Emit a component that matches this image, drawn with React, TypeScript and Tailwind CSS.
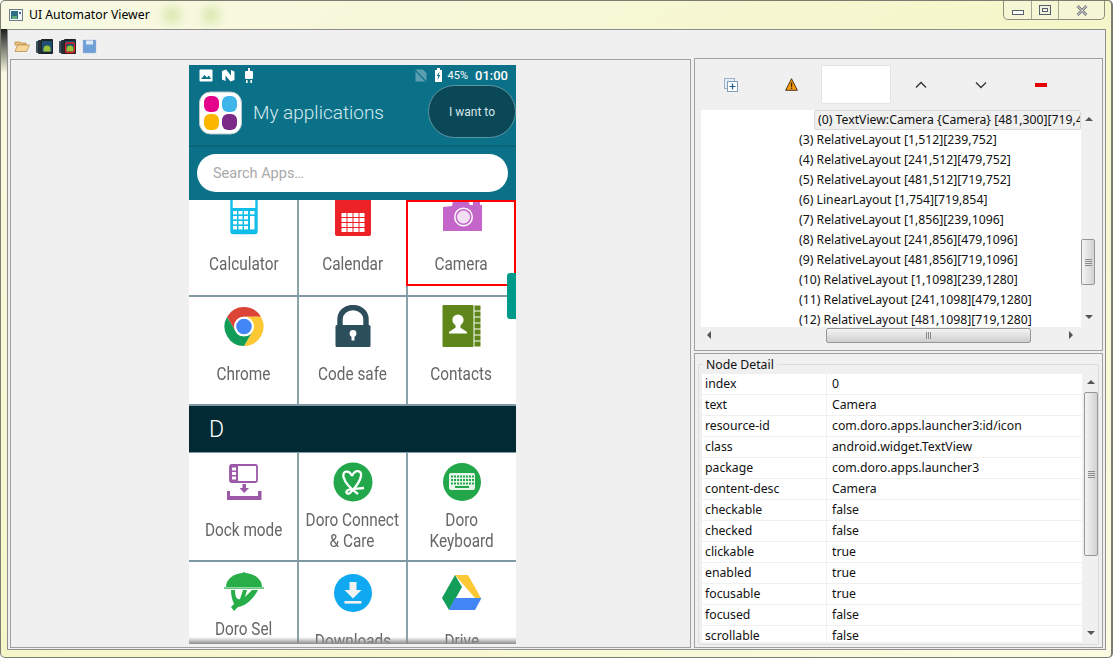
import React from "react";

const UI = "font-['Noto_Sans',sans-serif]";

function Arrow({ dir, className = "" }: { dir: "up" | "down" | "left" | "right"; className?: string }) {
  const pts = { up: "0,5 4,1 8,5", down: "0,1 8,1 4,5", left: "5,0 5,8 1,4", right: "1,0 1,8 5,4" }[dir];
  return (
    <svg width="8" height="8" viewBox="0 0 8 8" className={className}>
      <polygon points={pts} fill="#555" />
    </svg>
  );
}

function VThumb({ h }: { h: number }) {
  return (
    <div style={{ height: h }} className="w-[14px] rounded-[2px] border border-[#979797] bg-gradient-to-r from-[#f4f4f4] to-[#d2d2d2] flex flex-col items-center justify-center gap-[1px]">
      <div className="w-[7px] h-px bg-[#8a8a8a]" />
      <div className="w-[7px] h-px bg-[#8a8a8a]" />
      <div className="w-[7px] h-px bg-[#8a8a8a]" />
      <div className="w-[7px] h-px bg-[#8a8a8a]" />
    </div>
  );
}

function TitleBar() {
  return (
    <div className="relative h-[28px] shrink-0 flex items-start justify-between">
      <div className="flex items-center pl-[2px] pt-[5px] gap-[6px]">
        <svg width="14" height="14" viewBox="0 0 14 14">
          <rect x="0.5" y="1.5" width="13" height="11" fill="#f4f6f8" stroke="#6d7c88" />
          <rect x="2" y="3" width="7" height="8" fill="#2f6f7f" />
          <rect x="3" y="8" width="5" height="3" fill="#5fae7a" />
          <rect x="10" y="4" width="2" height="2" fill="#3d6fb5" />
        </svg>
        <span className={`${UI} text-[12.25px] text-black`}>UI Automator Viewer</span>
      </div>
      <div className="flex h-[19px] w-[102px] mr-px rounded-b-[5px] border border-t-0 border-[#8c8f80] bg-[#f5f6d8]/70">
        <div className="w-[28px] border-r border-[#a5a795] flex items-center justify-center">
          <div className="w-[12px] h-[5px] mt-[4px] border border-[#56606c] bg-white" />
        </div>
        <div className="w-[27px] border-r border-[#a5a795] flex items-center justify-center">
          <div className="w-[12px] h-[10px] border border-[#56606c] flex items-center justify-center bg-[#eef0e0]">
            <div className="w-[6px] h-[4px] border border-[#56606c]" />
          </div>
        </div>
        <div className="flex-1 flex items-center justify-center">
          <svg width="12" height="11" viewBox="0 0 12 11">
            <path d="M1.5 1 L10.5 10 M10.5 1 L1.5 10" stroke="#6b7078" strokeWidth="2.6" />
            <path d="M1.5 1 L10.5 10 M10.5 1 L1.5 10" stroke="#f4f4f4" strokeWidth="1" />
          </svg>
        </div>
      </div>
    </div>
  );
}

function DeviceIcon({ red }: { red?: boolean }) {
  return (
    <svg width="17" height="17" viewBox="0 0 17 17">
      <rect x="0" y="3" width="4" height="12" rx="1" fill="#39505e" />
      <rect x="2" y="2" width="5" height="14" rx="1" fill="#253038" />
      <rect x="5" y="1" width="12" height="15" rx="1" fill="#1c2226" />
      <rect x="6" y="3" width="10" height="11" fill="#1d4f73" />
      <path d="M7.5 11 a3.5 3.5 0 0 1 7 0 z" fill="#9cc13a" />
      <rect x="7.5" y="11" width="7" height="2.5" fill="#9cc13a" />
      {red && <rect x="6.5" y="5" width="9" height="9.5" rx="2" fill="none" stroke="#e02020" strokeWidth="1.3" />}
    </svg>
  );
}

function Toolbar() {
  return (
    <div className="h-[28px] shrink-0 flex items-center pl-[4px] pt-[4px] gap-[6px]">
      <svg width="16" height="14" viewBox="0 0 16 14">
        <path d="M1 3 h5 l1 1 h5 v2 H1z" fill="#e9c27e" stroke="#b98f4f" strokeWidth="0.8" />
        <path d="M1 12.5 L3.5 6 H15.5 L12.5 12.5 Z" fill="#f7d89a" stroke="#b98f4f" strokeWidth="0.8" />
      </svg>
      <DeviceIcon />
      <DeviceIcon red />
      <svg width="15" height="15" viewBox="0 0 15 15">
        <rect x="0.5" y="0.5" width="14" height="14" fill="#fff" stroke="#dfe6ee" />
        <rect x="1.5" y="1.5" width="12" height="12" fill="#6f9fd8" stroke="#5685bd" strokeWidth="0.6" />
        <rect x="4" y="1.5" width="7" height="4" fill="#dfeaf6" />
      </svg>
    </div>
  );
}

function StatusBar() {
  return (
    <div className="h-[20px] shrink-0 flex items-center pl-[10px] pr-[8px] text-white">
      <svg width="14" height="13" viewBox="0 0 14 13">
        <rect width="13" height="12" x="0.5" y="0.5" rx="1" fill="#fff" />
        <path d="M2 10 L5.5 6 L8 8.5 L10 6.5 L12 10 Z" fill="#0b7188" />
      </svg>
      <svg width="14" height="13" viewBox="0 0 14 13" className="ml-[8px]">
        <path d="M1 2 L5 0.5 L10 6.5 V1 L13.5 2.5 V11 L9.5 12.5 L4.5 6.5 V12 L1 10.5 Z" fill="#fff" />
      </svg>
      <svg width="8" height="15" viewBox="0 0 8 15" className="ml-[10px]">
        <path d="M3 0 h2 v3 h2 a1 1 0 0 1 1 1 v6 a1 1 0 0 1 -1 1 H1 a1 1 0 0 1 -1 -1 V4 a1 1 0 0 1 1 -1 h2z" fill="#fff" />
        <rect x="1" y="12" width="1.6" height="3" fill="#fff" />
        <rect x="5.4" y="12" width="1.6" height="3" fill="#fff" />
      </svg>
      <div className="flex-1" />
      <svg width="12" height="13" viewBox="0 0 12 13">
        <path d="M0.5 0.5 H8 L11.5 4 V12.5 H0.5 Z" fill="#5c9fb1" />
        <path d="M0 1 L11 12.5" stroke="#0b7188" strokeWidth="1.2" />
      </svg>
      <svg width="7" height="14" viewBox="0 0 7 14" className="ml-[8px]">
        <rect x="2" y="0" width="3" height="2" fill="#fff" />
        <rect x="0" y="2" width="7" height="12" fill="#fff" />
        <path d="M4.5 3.5 L1.8 8 H3.3 L2.5 12 L5.3 7 H3.8 Z" fill="#0b7188" />
      </svg>
      <span className="ml-[6px] font-['Roboto',sans-serif] text-[11px] leading-none">45%</span>
      <span className="ml-[7px] font-['Roboto',sans-serif] font-medium text-[13px] leading-none">01:00</span>
    </div>
  );
}

function Logo() {
  return (
    <svg width="43" height="44" viewBox="0 0 43 44">
      <rect x="0.5" y="1" width="42" height="42" rx="11" fill="#fff" stroke="#b9c7cb" />
      <rect x="5" y="5" width="15" height="16" rx="6" fill="#e5008a" />
      <rect x="23" y="5" width="15" height="16" rx="6" fill="#3eb6ea" />
      <rect x="5" y="23" width="15" height="16" rx="6" fill="#fdb600" />
      <rect x="23" y="23" width="15" height="16" rx="6" fill="#7b2a87" />
    </svg>
  );
}

function PhoneHeader() {
  return (
    <div className="shrink-0 bg-[#0b7188]">
      <StatusBar />
      <div className="h-[60px] flex items-start pl-[10px] relative">
        <div className="mt-[6px]"><Logo /></div>
        <span className="ml-[11px] mt-[14px] font-['Roboto',sans-serif] font-light text-[19px] leading-[27px] text-[#d5eaef]">My applications</span>
        <div className="absolute left-[239px] top-0 w-[88px] h-[53px] rounded-[27px] bg-[#0a4858] border border-[#5d97a5] flex items-center justify-center">
          <span className="font-['Roboto',sans-serif] text-[12px] text-[#d8e6ea]">I want to</span>
        </div>
      </div>
      <div className="h-[2px] bg-[#0a6579]" />
      <div className="pt-[7px] pb-[8px] pl-[8px] pr-[8px]">
        <div className="h-[38px] rounded-full bg-white flex items-center pl-[16px] pt-[2px]">
          <span className="font-['Roboto',sans-serif] text-[14.5px] text-[#a9a9a9]">Search Apps…</span>
        </div>
      </div>
    </div>
  );
}

const Calc = (
  <svg width="44" height="44" viewBox="0 0 44 44">
    <rect x="9.5" y="-4" width="25" height="41" rx="2" fill="#fff" stroke="#10bce8" strokeWidth="2.4" />
    <rect x="9" y="12" width="26" height="26" rx="1" fill="#10bce8" />
    {[15, 20, 25, 30].map((y) =>
      [11, 16.5, 22].map((x) => <rect key={`${x}-${y}`} x={x} y={y} width="4" height="3.4" fill="#fff" />)
    )}
    <rect x="28" y="15" width="4.5" height="3.4" fill="#fff" />
    <rect x="28" y="20" width="4.5" height="13.4" fill="#fff" />
  </svg>
);
const Cal = (
  <svg width="44" height="44" viewBox="0 0 44 44">
    <rect x="4" y="-4" width="36" height="44" rx="2" fill="#ec2227" />
    {[17, 22, 27, 32].map((y) =>
      [0, 1, 2, 3].map((i) => <rect key={`${i}-${y}`} x={10.5 + i * 6} y={y} width="5" height="4" fill="#fff" />)
    )}
  </svg>
);
const Cam = (
  <svg width="44" height="44" viewBox="0 0 44 44">
    <path d="M3 11 L12 10 L13 5 H28 L30 9 H42 V35 H3 Z" fill="#c465c9" />
    <rect x="33" y="6" width="7" height="3" fill="#c465c9" />
    <circle cx="23.5" cy="21" r="9.5" fill="#fff" />
    <circle cx="23.5" cy="21" r="8" fill="#c465c9" />
    <circle cx="23.5" cy="21" r="6.5" fill="#f2dff3" />
  </svg>
);
const Chrome = (
  <svg width="44" height="44" viewBox="0 0 44 44">
    <path d="M5.1 11.75 A19.5 19.5 0 0 1 38.9 11.75 H22 A9.75 9.75 0 0 0 13.55 26.4 Z" fill="#db4437" />
    <path d="M38.9 11.75 A19.5 19.5 0 0 1 22 41 L30.45 26.4 A9.75 9.75 0 0 0 22 11.75 Z" fill="#fcc934" />
    <path d="M22 41 A19.5 19.5 0 0 1 5.1 11.75 L13.55 26.4 A9.75 9.75 0 0 0 30.45 26.4 Z" fill="#0f9d58" />
    <circle cx="22" cy="21.5" r="9.75" fill="#fff" />
    <circle cx="22" cy="21.5" r="7.8" fill="#4285f4" />
  </svg>
);
const Lock = (
  <svg width="44" height="44" viewBox="0 0 44 44">
    <path d="M9 22 V14 A13 11.5 0 0 1 35 14 V22" fill="none" stroke="#2c4d5a" strokeWidth="5.4" />
    <rect x="4.5" y="20" width="35" height="22" rx="1.5" fill="#2c4d5a" />
    <circle cx="22" cy="28.5" r="3.4" fill="#fff" />
    <rect x="20.5" y="29" width="3" height="6.5" fill="#fff" />
  </svg>
);
const Contacts = (
  <svg width="44" height="44" viewBox="0 0 44 44">
    <rect x="2.5" y="0" width="31" height="42" rx="1" fill="#5f861b" />
    {[0, 6, 12, 18, 24, 30, 36].map((y) => <rect key={y} x="34.5" y={y + 0.5} width="6" height="5" fill="#5f861b" />)}
    <circle cx="18" cy="15" r="5.6" fill="#fff" />
    <rect x="15.5" y="17" width="5" height="6" fill="#fff" />
    <path d="M9 27 L15 23 H21 L27 27 V28.5 H9 Z" fill="#fff" />
  </svg>
);
const Dock = (
  <svg width="44" height="44" viewBox="0 0 44 44">
    <rect x="8" y="4" width="27" height="17" rx="1.5" fill="#fff" stroke="#9b59a8" strokeWidth="1.8" />
    <rect x="8" y="4" width="8" height="17" fill="#9b59a8" />
    <rect x="10" y="6.5" width="4" height="3" fill="#fff" />
    <rect x="10" y="11" width="4" height="3" fill="#fff" />
    <rect x="10" y="15.5" width="4" height="3" fill="#fff" />
    <path d="M20.5 23 H24 V27 H27 L22.2 32 L17.5 27 H20.5 Z" fill="#9b59a8" />
    <path d="M5 30 H8 V35 H36 V30 H39.5 V39 H5 Z" fill="#9b59a8" />
  </svg>
);
const Connect = (
  <svg width="44" height="44" viewBox="0 0 44 44">
    <circle cx="22" cy="21" r="19.5" fill="#22a84a" />
    <path d="M21 15 C18 8 11 10 12.5 16 C14 22 20 28 27 33 M21 15 C24 8 31 9 30 15 C29 21 24 27 19 32 C16 34 14 31 17 29 C22 27 28 28 33 27" fill="none" stroke="#fff" strokeWidth="2.3" />
  </svg>
);
const Keyboard = (
  <svg width="44" height="44" viewBox="0 0 44 44">
    <circle cx="22" cy="21" r="19" fill="#22a84a" />
    <rect x="9" y="12" width="26" height="17" rx="2" fill="#e8f6ea" />
    {[14.5, 18, 21.5].map((y) =>
      [11, 14, 17, 20, 23, 26, 29, 32].map((x) => <rect key={`${x}-${y}`} x={x} y={y} width="2" height="2" fill="#22a84a" />)
    )}
    <rect x="15" y="25" width="14" height="2" fill="#22a84a" />
  </svg>
);
const Sel = (
  <svg width="44" height="44" viewBox="0 0 44 44">
    <circle cx="22" cy="3.5" r="1.6" fill="#27ae48" />
    <path d="M4 17 A18 14 0 0 1 40 17 Z" fill="#27ae48" />
    <rect x="2" y="17.5" width="40" height="1.2" fill="#27ae48" />
    <path d="M9 20 H13 C13 27 15 30 18 29 L21 20 H25 L23 27 L30 20 H36 C32 28 24 36 16 37 L12 41 L9 37 L12 34 C10 30 9 25 9 20 Z" fill="#27ae48" />
  </svg>
);
const Down = (
  <svg width="44" height="44" viewBox="0 0 44 44">
    <circle cx="22" cy="23" r="19" fill="#0ea9f1" />
    <path d="M18.5 12 H25.5 V20 H30.5 L22 28.5 L13.5 20 H18.5 Z" fill="#f2f2f2" />
    <rect x="13.5" y="31" width="17" height="2.6" fill="#f2f2f2" />
  </svg>
);
const Drive = (
  <svg width="44" height="44" viewBox="0 0 44 44">
    <path d="M15 5 H28 L41 28 L35 28 Z" fill="#fcc934" />
    <path d="M15 5 L2 28 L9 40 L22 17 Z" fill="#129d58" />
    <path d="M15 28 H41.5 L35 40 H9 Z" fill="#4285f4" />
  </svg>
);

function Cell({ icon, lines, border = true, labelClass = "mt-[3px]" }: { icon: React.ReactNode; lines: string[]; border?: boolean; labelClass?: string }) {
  return (
    <div className={`w-[109px] h-full shrink-0 flex flex-col items-center pt-[8px] border-r-[2px] ${border ? "border-[#8aa3ab]" : "border-transparent"}`}>
      <div className="h-[44px] w-[44px]">{icon}</div>
      <div className={`h-[50px] flex flex-col justify-center items-center ${labelClass}`}>
        {lines.map((l) => (
          <span key={l} className="block whitespace-nowrap font-['Roboto',sans-serif] text-[18.5px] leading-[21px] text-[#666] scale-x-[0.83]">{l}</span>
        ))}
      </div>
    </div>
  );
}

function Row({ children }: { children: React.ReactNode }) {
  return <div className="h-[109px] shrink-0 flex pl-px border-b-[2px] border-[#7e99a2] bg-white">{children}</div>;
}

function Phone() {
  return (
    <div className="relative w-[327px] h-[579px] ml-[178px] mt-[5px] flex flex-col overflow-hidden bg-white">
      <PhoneHeader />
      <div className="flex-1 min-h-0 overflow-hidden">
        <div className="-mt-[12px]">
          <Row>
            <Cell icon={Calc} lines={["Calculator"]} labelClass="-mt-px" />
            <Cell icon={Cal} lines={["Calendar"]} labelClass="-mt-px" />
            <Cell icon={Cam} lines={["Camera"]} border={false} labelClass="-mt-px" />
          </Row>
          <Row>
            <Cell icon={Chrome} lines={["Chrome"]} labelClass="mt-0" />
            <Cell icon={Lock} lines={["Code safe"]} labelClass="mt-0" />
            <Cell icon={Contacts} lines={["Contacts"]} border={false} labelClass="mt-0" />
          </Row>
          <div className="h-[47px] bg-[#022a35] flex items-center pl-[20px] pt-[3px] border-b border-[#7e99a2]">
            <span className="font-['Roboto',sans-serif] font-light text-[23px] text-white">D</span>
          </div>
          <Row>
            <Cell icon={Dock} lines={["Dock mode"]} labelClass="mt-0" />
            <Cell icon={Connect} lines={["Doro Connect", "& Care"]} labelClass="mt-px" />
            <Cell icon={Keyboard} lines={["Doro", "Keyboard"]} border={false} labelClass="mt-px" />
          </Row>
          <Row>
            <div className="w-[109px] h-full shrink-0 flex flex-col items-center pt-[8px] border-r-[2px] border-[#8aa3ab]">
              <div className="h-[44px] w-[44px]">{Sel}</div>
              <span className="mt-[5px] whitespace-nowrap font-['Roboto',sans-serif] text-[18.5px] leading-[21px] text-[#666] scale-x-[0.83]">Doro Sel</span>
            </div>
            <Cell icon={Down} lines={["Downloads"]} labelClass="mt-[2px]" />
            <Cell icon={Drive} lines={["Drive"]} border={false} labelClass="mt-[2px]" />
          </Row>
        </div>
      </div>
      <div className="absolute left-0 right-0 bottom-0 h-[7px] bg-gradient-to-b from-transparent to-[#8c8c8c]" />
      <div className="absolute left-[217px] top-[135px] w-[110px] h-[86px] border-2 border-[#ff0000]" />
      <div className="absolute left-[318px] top-[208px] w-[9px] h-[46px] rounded-l-[3px] bg-[#009a8a]" />
    </div>
  );
}

const tree = [
  "(3) RelativeLayout [1,512][239,752]",
  "(4) RelativeLayout [241,512][479,752]",
  "(5) RelativeLayout [481,512][719,752]",
  "(6) LinearLayout [1,754][719,854]",
  "(7) RelativeLayout [1,856][239,1096]",
  "(8) RelativeLayout [241,856][479,1096]",
  "(9) RelativeLayout [481,856][719,1096]",
  "(10) RelativeLayout [1,1098][239,1280]",
  "(11) RelativeLayout [241,1098][479,1280]",
  "(12) RelativeLayout [481,1098][719,1280]",
];

const details: [string, string][] = [
  ["index", "0"],
  ["text", "Camera"],
  ["resource-id", "com.doro.apps.launcher3:id/icon"],
  ["class", "android.widget.TextView"],
  ["package", "com.doro.apps.launcher3"],
  ["content-desc", "Camera"],
  ["checkable", "false"],
  ["checked", "false"],
  ["clickable", "true"],
  ["enabled", "true"],
  ["focusable", "true"],
  ["focused", "false"],
  ["scrollable", "false"],
];

function TreeToolbar() {
  return (
    <div className="h-[39px] shrink-0 flex items-center">
      <div className="w-[60px] flex justify-center">
        <svg width="14" height="14" viewBox="0 0 14 14">
          <rect x="0.5" y="0.5" width="10" height="10" fill="#e6edf4" stroke="#9db2c8" />
          <rect x="3.5" y="3.5" width="10" height="10" fill="#fff" stroke="#7f9cb9" />
          <path d="M8.5 5.5 V11.5 M5.5 8.5 H11.5" stroke="#1e5d8c" strokeWidth="1.2" />
        </svg>
      </div>
      <div className="w-[60px] flex justify-center">
        <svg width="13" height="13" viewBox="0 0 13 13">
          <path d="M6.5 0.7 L12.4 12.3 H0.6 Z" fill="#f79a10" stroke="#3a2a10" strokeWidth="0.9" />
          <rect x="5.9" y="4.5" width="1.3" height="4.3" fill="#3a2a10" />
          <rect x="5.9" y="9.6" width="1.3" height="1.3" fill="#3a2a10" />
        </svg>
      </div>
      <div className="w-[70px] h-[39px] bg-white rounded-[2px] border border-[#e4e4e4]" />
      <div className="w-[60px] flex justify-center">
        <svg width="12" height="8" viewBox="0 0 12 8"><path d="M1 6.5 L6 1.5 L11 6.5" fill="none" stroke="#333" strokeWidth="1.3" /></svg>
      </div>
      <div className="w-[60px] flex justify-center">
        <svg width="12" height="8" viewBox="0 0 12 8"><path d="M1 1.5 L6 6.5 L11 1.5" fill="none" stroke="#333" strokeWidth="1.3" /></svg>
      </div>
      <div className="w-[60px] flex justify-center">
        <div className="w-[12px] h-[4px] bg-[#e60000]" />
      </div>
    </div>
  );
}

function TreePanel() {
  return (
    <div className="h-[293px] shrink-0 border border-[#a0a0a0] pl-[6px] pt-[6px] flex flex-col">
      <TreeToolbar />
      <div className="h-[6px] shrink-0" />
      <div className="flex w-[396px] h-[217px] shrink-0">
        <div className={`${UI} w-[380px] bg-white overflow-hidden text-[12.25px] text-[#111]`}>
          <div className="ml-[113px] h-[20px] pl-[3px] border border-[#d9d9d9] rounded-[2px] bg-[#f0f0f0] flex items-center whitespace-nowrap overflow-hidden">
            (0) TextView:Camera {"{Camera}"} [481,300][719,452]
          </div>
          {tree.map((t) => (
            <div key={t} className="h-[20px] ml-[98px] flex items-center whitespace-nowrap">{t}</div>
          ))}
        </div>
        <div className="w-[16px] bg-[#f0f0f0] flex flex-col items-start">
          <Arrow dir="up" className="ml-[4px] mt-[6px]" />
          <div className="h-[115px]" />
          <VThumb h={46} />
          <div className="flex-1" />
          <Arrow dir="down" className="ml-[4px] mb-[5px]" />
        </div>
      </div>
      <div className="w-[396px] h-[16px] shrink-0 bg-[#f0f0f0] flex items-center relative">
        <Arrow dir="left" className="ml-[5px]" />
        <div className="ml-[112px] w-[205px] h-[15px] rounded-[2px] border border-[#979797] bg-gradient-to-b from-[#f4f4f4] to-[#cfcfcf] flex items-center justify-center gap-[1px]">
          <div className="w-px h-[7px] bg-[#8a8a8a]" />
          <div className="w-px h-[7px] bg-[#8a8a8a]" />
          <div className="w-px h-[7px] bg-[#8a8a8a]" />
        </div>
        <Arrow dir="right" className="ml-[37px]" />
      </div>
    </div>
  );
}

function DetailPanel() {
  return (
    <div className="mt-[2px] flex-1 min-h-0 border border-[#a0a0a0] px-[3px] pt-[10px] pb-[2px]">
      <div className="relative h-full border border-[#dcdcdc] rounded-[2px] pl-[3px] pt-[9px] flex">
        <span className={`${UI} absolute left-[4px] -top-[8px] px-[3px] bg-[#f0f0f0] text-[12.25px] leading-[15px] text-[#111]`}>Node Detail</span>
        <div className={`${UI} w-[380px] h-[268px] bg-white overflow-hidden text-[12.25px] text-[#111]`}>
          {details.map(([k, v]) => (
            <div key={k} className="h-[21px] flex items-center border-b border-[#f0f0f0]">
              <div className="w-[125px] h-full pl-[3px] border-r border-[#f0f0f0] flex items-center">{k}</div>
              <div className="pl-[5px]">{v}</div>
            </div>
          ))}
        </div>
        <div className="ml-[2px] w-[14px] h-[268px] bg-[#f0f0f0] flex flex-col items-center">
          <Arrow dir="up" className="mt-[5px]" />
          <div className="h-[5px]" />
          <VThumb h={164} />
          <div className="flex-1" />
          <Arrow dir="down" className="mb-[4px]" />
        </div>
      </div>
    </div>
  );
}

export default function App() {
  return (
    <div className="relative w-[1113px] h-[658px] overflow-hidden flex flex-col pl-[6px] pr-[5px] pb-[7px] border border-r-2 border-[#7a7d70] rounded-[5px] bg-gradient-to-br from-[#f8f9e4] via-[#f5f6c8] to-[#fbfbe2]">
      <div className="absolute left-0 top-[28px] w-[6px] h-[44px] bg-gradient-to-b from-[#1e1e1e] to-transparent" />
      <div className="absolute left-[162px] top-[5px] w-[18px] h-[18px] rounded-full bg-[#cfe3a0]/70 blur-[5px]" />
      <div className="absolute left-[201px] top-[5px] w-[18px] h-[18px] rounded-full bg-[#cfe3a0]/70 blur-[5px]" />
      <TitleBar />
      <div className="relative flex-1 min-h-0 border border-[#8f8f8f] bg-[#f0f0f0] flex flex-col px-[2px] pb-[1px]">
        <Toolbar />
        <div className="flex-1 min-h-0 flex gap-[3px]">
          <div className="w-[681px] shrink-0 mt-px border border-[#a0a0a0]">
            <Phone />
          </div>
          <div className="w-[409px] shrink-0 flex flex-col">
            <TreePanel />
            <DetailPanel />
          </div>
        </div>
      </div>
    </div>
  );
}
